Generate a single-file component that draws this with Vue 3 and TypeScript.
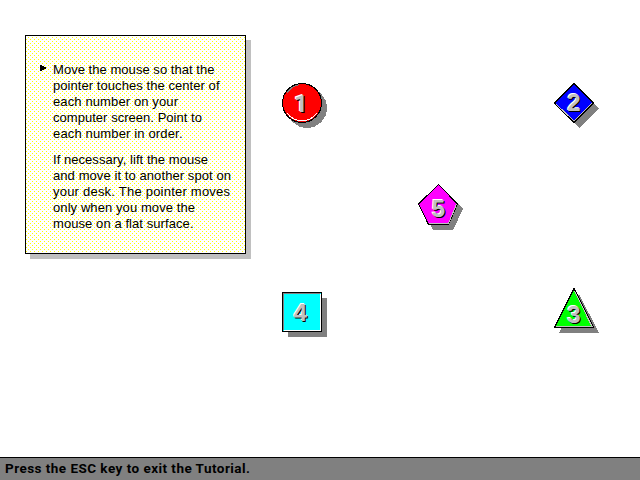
<script setup lang="ts">
interface Line { text: string; width: number }
interface Target {
  n: number
  x: number
  y: number
  fill: string
  shape: 'circle' | 'poly'
  points: string
  shadow: string
  tx: number
  ty: number
}

const paragraphs: Line[][] = [
  [
    { text: 'Move the mouse so that the', width: 161.5 },
    { text: 'pointer touches the center of', width: 166.5 },
    { text: 'each number on your', width: 125 },
    { text: 'computer screen. Point to', width: 149 },
    { text: 'each number in order.', width: 129.5 },
  ],
  [
    { text: 'If necessary, lift the mouse', width: 155 },
    { text: 'and move it to another spot on', width: 178 },
    { text: 'your desk. The pointer moves', width: 177 },
    { text: 'only when you move the', width: 142 },
    { text: 'mouse on a flat surface.', width: 140.5 },
  ],
]

const targets: Target[] = [
  { n: 1, x: 275, y: 75, fill: '#f00', shape: 'circle', points: '', shadow: '', tx: 26, ty: 37 },
  { n: 2, x: 545, y: 75, fill: '#00f', shape: 'poly', points: '29,8.5 48.5,28 29,47.5 9.5,28', shadow: '34,14 54,33 34,53 14,33', tx: 29, ty: 36 },
  { n: 5, x: 410, y: 178, fill: '#f0f', shape: 'poly', points: '28.5,6.5 47.5,26 38.5,46.5 18.5,46.5 8.5,26', shadow: '33,11 53,31 43,52 23,52 14,31', tx: 28.5, ty: 39 },
  { n: 4, x: 275, y: 285, fill: '#0ff', shape: 'poly', points: '7.5,7.5 46.5,7.5 46.5,46.5 7.5,46.5', shadow: '13,13 52,13 52,52 13,52', tx: 25.5, ty: 36 },
  { n: 3, x: 545, y: 282, fill: '#0f0', shape: 'poly', points: '29,6.5 48.5,45.5 9.5,45.5', shadow: '34,12 54,51 14,51', tx: 29, ty: 41 },
]
</script>

<template>
  <main class="screen">
    <section class="panel">
      <svg class="dither" width="219" height="217" shape-rendering="crispEdges">
        <defs>
          <pattern id="dots" width="4" height="4" patternUnits="userSpaceOnUse">
            <rect x="2" y="1" width="1" height="1" fill="#ff0" />
            <rect x="0" y="3" width="1" height="1" fill="#ff0" />
          </pattern>
        </defs>
        <rect width="219" height="217" fill="url(#dots)" />
      </svg>
      <svg class="marker" width="8" height="8" viewBox="0 0 8 8" shape-rendering="crispEdges">
        <path d="M0 0H2V1H4V2H6V4H4V5H2V6H0Z" />
      </svg>
      <div class="copy">
        <p v-for="(lines, i) in paragraphs" :key="i">
          <svg v-for="line in lines" :key="line.text" class="line" width="185" height="16">
            <text x="0" y="12" :textLength="line.width" lengthAdjust="spacing">{{ line.text }}</text>
          </svg>
        </p>
      </div>
    </section>

    <svg
      v-for="t in targets"
      :key="t.n"
      class="target"
      :style="{ left: t.x + 'px', top: t.y + 'px' }"
      width="60"
      height="60"
      viewBox="0 0 60 60"
    >
      <g shape-rendering="crispEdges">
        <template v-if="t.shape === 'circle'">
          <circle cx="32" cy="33" r="20" fill="#808080" />
          <circle cx="27" cy="28" r="19.5" :fill="t.fill" stroke="#000" />
          <path d="M12 38A18.5 18.5 0 0 0 42 38" fill="none" stroke="#fff" stroke-width="1" />
          <path d="M12 18A18.5 18.5 0 0 1 24 9.7" fill="none" stroke="#808080" />
        </template>
        <template v-else>
          <polygon :points="t.shadow" fill="#808080" />
          <polygon :points="t.points" :fill="t.fill" stroke="#000" />
        </template>
        <path v-if="t.n === 2" d="M11 29L29 46L47 28" fill="none" stroke="#c0c0c0" />
        <path v-if="t.n === 5" d="M19 45.5H38.5L46.5 26" fill="none" stroke="#c0c0c0" />
        <path v-if="t.n === 4" d="M8.5 45V8.5H45" fill="none" stroke="#808080" />
        <path v-if="t.n === 4" d="M9 45.5H45.5V9" fill="none" stroke="#fff" />
        <path v-if="t.n === 3" d="M11 44.5H47L29.5 9" fill="none" stroke="#c0c0c0" />
      </g>
      <text class="digit" :class="{ plain: t.n === 1 }" text-anchor="middle" :x="t.tx" :y="t.ty">{{ t.n }}</text>
    </svg>

    <footer class="status">
      <svg width="260" height="22">
        <text x="0" y="15" textLength="245" lengthAdjust="spacing">Press the ESC key to exit the Tutorial.</text>
      </svg>
    </footer>
  </main>
</template>

<style>
body { background: #fff; }
</style>

<style scoped>
.screen {
  position: relative;
  box-sizing: border-box;
  width: 640px;
  height: 480px;
  padding: 35px 0 0 25px;
  display: flex;
  flex-direction: column;
  overflow: hidden;
  background: #fff;
  font-family: "Liberation Sans", Arial, sans-serif;
}
.panel {
  position: relative;
  box-sizing: border-box;
  width: 221px;
  height: 219px;
  padding: 26px 0 0 14px;
  display: flex;
  gap: 5px;
  border: 1px solid #000;
  box-shadow: 5px 5px 0 #c0c0c0;
  background: #fff;
}
.dither { position: absolute; top: 0; left: 0; }
.marker { position: relative; flex: none; margin-top: 3px; }
.copy { position: relative; display: flex; flex-direction: column; gap: 10px; }
p { margin: 0; display: flex; flex-direction: column; }
.line { display: block; overflow: visible; font-size: 13px; }
.target { position: absolute; overflow: visible; }
.digit {
  font: bold 24px "Liberation Sans", Arial, sans-serif;
  fill: #c0c0c0;
  text-shadow: 1px 1px 0 #000, -1px -1px 0 #fff;
}
.plain { font-family: Roboto, "Liberation Sans", sans-serif; }
.status {
  box-sizing: border-box;
  height: 23px;
  margin: auto 0 0 -25px;
  padding-left: 5px;
  border-top: 1px solid #000;
  background: #808080;
  font-family: Roboto, "Liberation Sans", sans-serif;
  font-size: 13.5px;
  font-weight: bold;
}
.status svg { display: block; }
</style>
